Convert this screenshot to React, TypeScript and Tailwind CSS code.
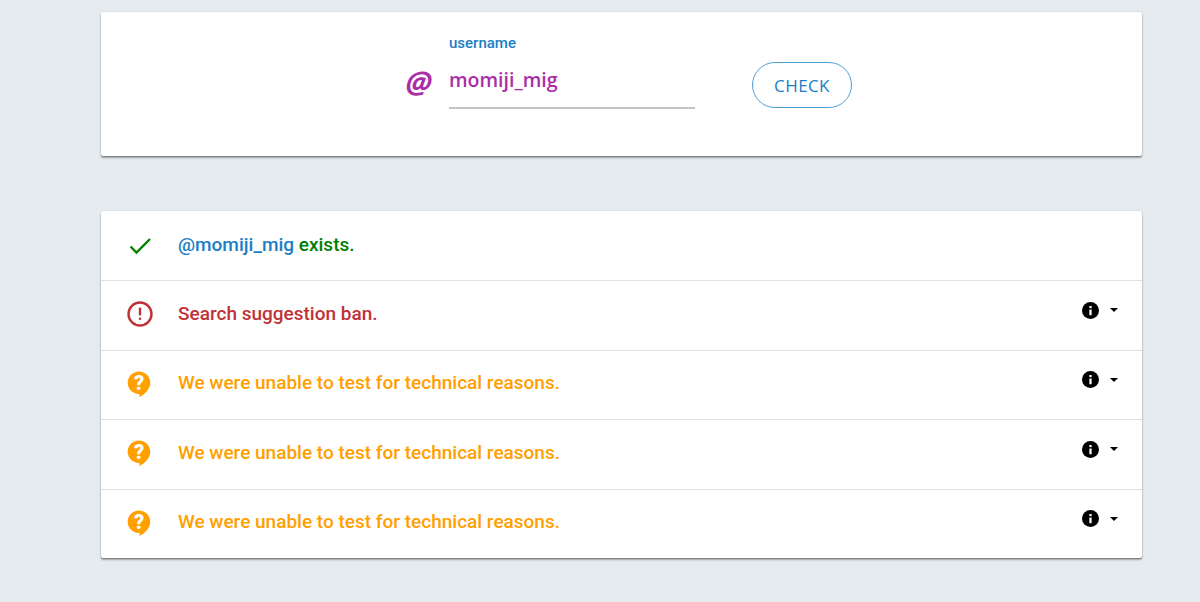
import * as React from "react"

const rowShadow = "shadow-[0_1px_1px_rgba(0,0,0,0.2),0_2px_2px_rgba(0,0,0,0.3),0_0_2px_rgba(0,0,0,0.14)]"

function InfoToggle() {
  return (
    <div className="flex items-center gap-[11px] mb-[11px]">
      <svg width="17" height="17" viewBox="0 0 18 18">
        <circle cx="9" cy="9" r="9" fill="#000" />
        <rect x="7.800" y="8" width="2.400" height="6" fill="#fff" />
        <rect x="7.800" y="4.200" width="2.400" height="2.300" fill="#fff" />
      </svg>
      <svg width="8" height="4" viewBox="0 0 8 4">
        <path d="M0 0h8L4 4z" fill="#000" />
      </svg>
    </div>
  )
}

function QuestionIcon() {
  return (
    <svg width="24" height="26" viewBox="0 0 24 26">
      <path d="M12 .5C5.600.5.700 5.500.700 11.800c0 6.200 5 11.200 11.200 11.200h.6v3c5.800-2.800 10.800-8.300 10.800-14.200C23.300 5.500 18.300.5 12 .5z" fill="#ffa000" />
      <text x="12" y="18.500" textAnchor="middle" fontFamily="Roboto, sans-serif" fontWeight="900" fontSize="20" fill="#fff">?</text>
    </svg>
  )
}

function Row({ icon, children, info, height }: { icon: React.ReactNode; children: React.ReactNode; info?: boolean; height: string }) {
  return (
    <div className={`flex items-center border-b border-[#e0e0e0] last:border-b-0 pl-[26px] pr-[24px] ${height}`}>
      <div className="w-[51px] flex items-center mb-[3px]">{icon}</div>
      <div className="flex-1 text-[19px] font-medium leading-[24px] mb-[4px] font-['Roboto',sans-serif]">{children}</div>
      {info && <InfoToggle />}
    </div>
  )
}

export default function App() {
  const rowHeights = ["h-[69px]", "h-[70px]", "h-[68px]"]
  return (
    <div className="min-h-[602px] bg-[#e6ebef] pt-3 pl-[101px] pr-[58px] overflow-hidden">
      <div className={`h-[144px] bg-white rounded-[2px] ${rowShadow} flex items-start pl-[305px] pt-[23px]`}>
        <div className="w-[43px] mt-[29px] text-[30px] leading-[36px] font-bold italic text-[#ab2ca8] font-['Open_Sans',sans-serif]">
          <span className="inline-block -skew-x-6">@</span>
        </div>
        <div className="w-[246px]">
          <div className="text-[15px] font-medium leading-[17px] text-[#1a7ec4] font-['Roboto',sans-serif]">username</div>
          <div className="pt-[7px] mt-[8px] h-[49px] border-b-2 border-[#c4c4c4] text-[19.500px] font-semibold leading-[26px] text-[#ab2ca8] font-['Open_Sans',sans-serif]">momiji_mig</div>
        </div>
        <button className="ml-[57px] mt-[27px] w-[100px] h-[46px] rounded-full border border-[#4d9fd6] text-[17px] leading-[46px] text-[#1a7ec4] tracking-[0.4px] font-['Open_Sans',sans-serif]">
          CHECK
        </button>
      </div>

      <div className={`mt-[55px] bg-white rounded-[2px] ${rowShadow}`}>
        <Row height="h-[70px]" icon={
          <svg width="26" height="20" viewBox="0 0 26 20" className="mt-[3px]">
            <path d="M3.500 10.500l6 6L23 3" fill="none" stroke="#008000" strokeWidth="2.400" />
          </svg>
        }>
          <div className="mt-[2px]"><span className="text-[#1a7ec4]">@momiji_mig</span> <span className="text-[#008000]">exists.</span></div>
        </Row>
        <Row height="h-[70px]" info icon={
          <svg width="26" height="26" viewBox="0 0 26 26">
            <circle cx="13" cy="13" r="11.500" fill="none" stroke="#c03237" strokeWidth="2.400" />
            <rect x="11.800" y="6.500" width="2.400" height="8" rx="1" fill="#c03237" />
            <rect x="11.800" y="16.500" width="2.400" height="2.600" rx="1" fill="#c03237" />
          </svg>
        }>
          <span className="text-[#c03237]">Search suggestion ban.</span>
        </Row>
        {rowHeights.map((h) => (
          <Row key={h} height={h} info icon={<QuestionIcon />}>
            <span className="text-[#ffa000]">We were unable to test for technical reasons.</span>
          </Row>
        ))}
      </div>
    </div>
  )
}
